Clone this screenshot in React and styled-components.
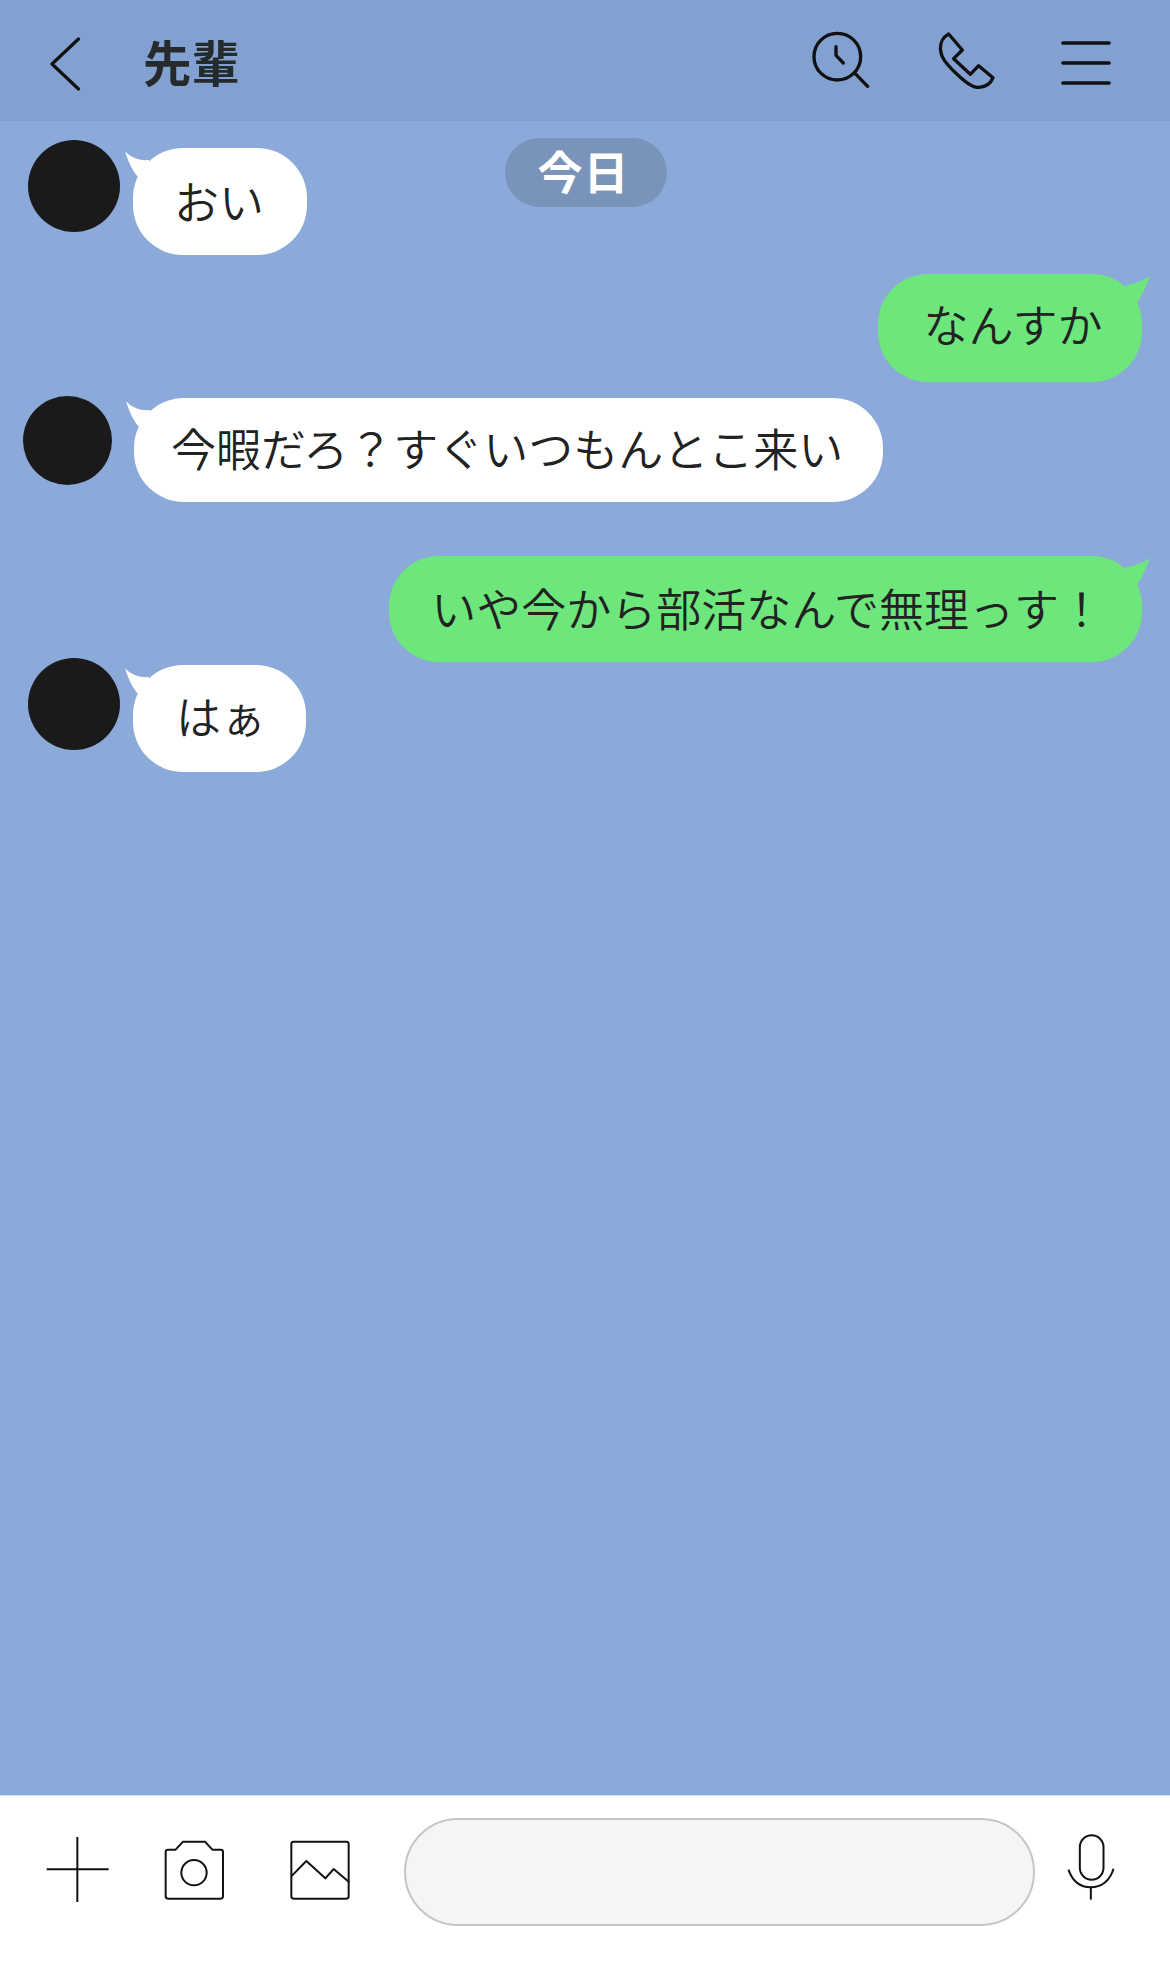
import React from "react";
import styled, { createGlobalStyle } from "styled-components";

const Global = createGlobalStyle`
  html, body { margin: 0; padding: 0; }
  body { font-family: "Noto Sans CJK JP", "Liberation Sans", sans-serif; background: #8baad9; }
`;

const Page = styled.div`
  width: 1170px;
  height: 1968px;
  display: flex;
  flex-direction: column;
  overflow: hidden;
`;

const Header = styled.header`
  height: 121px;
  flex: none;
  background: #82a1d0;
  display: flex;
  align-items: center;
  padding-left: 50px;
  box-sizing: border-box;
`;

const IconSvg = styled.svg`
  display: block;
  flex: none;
  fill: none;
  stroke: #111;
  stroke-linecap: round;
  stroke-linejoin: round;
`;

const BackIcon = styled(IconSvg)`
  margin-top: 7px;
`;

const Title = styled.h1`
  margin: 0 0 0 62px;
  font-size: 48.5px;
  line-height: 1;
  font-weight: 700;
  color: #252a2c;
  flex: 1;
  position: relative;
  top: 1px;
`;

const HeaderIcons = styled.div`
  display: flex;
  align-items: flex-start;
  height: 121px;
  padding-top: 30px;
  box-sizing: border-box;
  padding-right: 58px;
`;

const SearchIcon = styled(IconSvg)`
  margin-right: 65px;
`;

const PhoneIcon = styled(IconSvg)`
  margin-right: 65px;
  margin-top: 1px;
`;

const MenuIcon = styled(IconSvg)`
  margin-top: 10px;
`;

const Chat = styled.main`
  flex: 1;
  position: relative;
  background: #8baad9;
  padding: 19px 28px 0 0;
  display: flex;
  flex-direction: column;
`;

const DatePill = styled.div`
  position: absolute;
  top: 17px;
  left: 505px;
  width: 162px;
  height: 69px;
  border-radius: 35px;
  background: #7a93b9;
  color: #fff;
  font-size: 45px;
  font-weight: 700;
  line-height: 66px;
  text-align: center;
  letter-spacing: 1px;
  text-indent: -5px;
`;

const Row = styled.div`
  display: flex;
  align-items: flex-start;
  justify-content: ${(p) => (p.$mine ? "flex-end" : "flex-start")};
  margin-top: ${(p) => p.$top || 0}px;
`;

const Avatar = styled.div`
  flex: none;
  width: ${(p) => p.$size}px;
  height: ${(p) => p.$size}px;
  margin-left: ${(p) => p.$left}px;
  margin-right: ${(p) => p.$gap}px;
  border-radius: 50%;
  background: #1a1a1a;
`;

const Bubble = styled.div`
  position: relative;
  box-sizing: border-box;
  height: ${(p) => p.$height}px;
  margin-top: ${(p) => p.$offset || 0}px;
  padding: 0 ${(p) => p.$padEnd}px 0 ${(p) => p.$padStart}px;
  border-radius: 50px;
  background: ${(p) => (p.$mine ? "#6de67c" : "#ffffff")};
  color: #222;
  font-size: 45px;
  font-weight: 350;
  line-height: ${(p) => p.$height - 2 * p.$lift}px;
  white-space: nowrap;
`;

const Tail = styled.svg`
  position: absolute;
  top: 0;
  ${(p) => (p.$mine ? "right: -8px;" : "left: -8px;")}
  width: 32px;
  height: 32px;
  fill: ${(p) => (p.$mine ? "#6de67c" : "#ffffff")};
`;

const Composer = styled.footer`
  height: 173px;
  flex: none;
  box-sizing: border-box;
  background: #fff;
  border-top: 1px solid #d3dff2;
  display: flex;
  align-items: flex-start;
  padding-left: 46px;
`;

const ToolIcon = styled(IconSvg)`
  margin-top: ${(p) => p.$top}px;
  margin-right: ${(p) => p.$end}px;
`;

const InputPill = styled.div`
  flex: none;
  box-sizing: border-box;
  width: 631px;
  height: 108px;
  margin-top: 22px;
  margin-right: 31px;
  background: #f5f5f5;
  border: 2.5px solid #c6c6c6;
  border-radius: 54px;
`;

const OtherTail = () => (
  <Tail $mine={false} viewBox="0 0 32 32">
    <path d="M0 3 C5 9 14 13 24 12 L22 40 L13 29 C7 22 3 13 0 3Z" />
  </Tail>
);

const MineTail = () => (
  <Tail $mine viewBox="0 0 32 32">
    <path d="M32 2 C26 6 18 10 8 11 L12 40 L20 27 C25 20 29 10 32 2Z" />
  </Tail>
);

export default function App() {
  return (
    <Page>
      <Global />
      <Header>
        <BackIcon width="31" height="54" viewBox="0 0 31 54" strokeWidth="3.2">
          <path d="M28.5 2 L2 27 L28.5 52" />
        </BackIcon>
        <Title>先輩</Title>
        <HeaderIcons>
          <SearchIcon width="61.67" height="60" viewBox="150 90 185 180" strokeWidth="10">
            <circle cx="232" cy="170" r="70" />
            <path d="M285 220 L323 259" />
            <path d="M228 140 L228 166 L250 189" />
          </SearchIcon>
          <PhoneIcon width="58.33" height="58.33" viewBox="530 95 175 175" strokeWidth="10">
            <path d="M565 104 L606 152 L580 178 L630 225 L655 199 L698 235 C690 255 672 265 650 264 C628 262 600 235 575 210 C556 190 543 175 541 155 C538 132 548 113 565 104Z" />
          </PhoneIcon>
          <MenuIcon width="52" height="46" viewBox="0 0 52 46" strokeWidth="3.6">
            <path d="M3 3 H49 M3 23 H49 M3 43 H49" />
          </MenuIcon>
        </HeaderIcons>
      </Header>

      <Chat>
        <DatePill>今日</DatePill>

        <Row>
          <Avatar $size={92} $left={27.5} $gap={13.5} />
          <Bubble $height={107} $lift={1} $offset={8} $padStart={41} $padEnd={43}>
            <OtherTail />
            おい
          </Bubble>
        </Row>

        <Row $mine $top={19}>
          <Bubble $mine $height={108} $lift={4} $padStart={45} $padEnd={39.5}>
            <MineTail />
            なんすか
          </Bubble>
        </Row>

        <Row $top={14}>
          <Avatar $size={89} $left={23} $gap={22} />
          <Bubble $height={104} $lift={2} $offset={2} $padStart={37} $padEnd={40}>
            <OtherTail />
            今暇だろ？すぐいつもんとこ来い
          </Bubble>
        </Row>

        <Row $mine $top={54}>
          <Bubble $mine $height={106} $lift={1} $padStart={42} $padEnd={38}>
            <MineTail />
            いや今から部活なんで無理っす！
          </Bubble>
        </Row>

        <Row $top={-4}>
          <Avatar $size={92} $left={27.5} $gap={13.5} />
          <Bubble $height={107} $lift={3} $offset={7} $padStart={43} $padEnd={40}>
            <OtherTail />
            はぁ
          </Bubble>
        </Row>
      </Chat>

      <Composer>
        <ToolIcon $top={41} $end={54} width="64" height="66" viewBox="140 170 192 198" strokeWidth="6">
          <path d="M142 267 H328 M234 170 V365" style={{ strokeLinecap: "butt" }} />
        </ToolIcon>
        <ToolIcon $top={44} $end={66} width="60" height="60" viewBox="490 178 180 180" strokeWidth="6">
          <path d="M525 207 L547 183 H613 L635 207 H660 Q667 207 667 214 V347 Q667 354 660 354 H502 Q495 354 495 347 V214 Q495 207 502 207Z" />
          <circle cx="580" cy="276" r="38" />
        </ToolIcon>
        <ToolIcon $top={44} $end={54} width="60" height="60" viewBox="869 180 180 180" strokeWidth="6">
          <rect x="873" y="185" width="172" height="171" rx="7" />
          <path d="M875 287 L918 243 L975 295 L1000 267 L1045 305" />
        </ToolIcon>
        <InputPill />
        <ToolIcon $top={37} $end={0} width="50" height="68" viewBox="263 155 145 204" strokeWidth="6">
          <rect x="302" y="162" width="71" height="133" rx="35.5" />
          <path d="M268 265 C280 300 305 318 335 318 C365 318 392 300 403 262" style={{ strokeLinecap: "butt" }} />
          <path d="M335 318 V355" style={{ strokeLinecap: "butt" }} />
        </ToolIcon>
      </Composer>
    </Page>
  );
}
